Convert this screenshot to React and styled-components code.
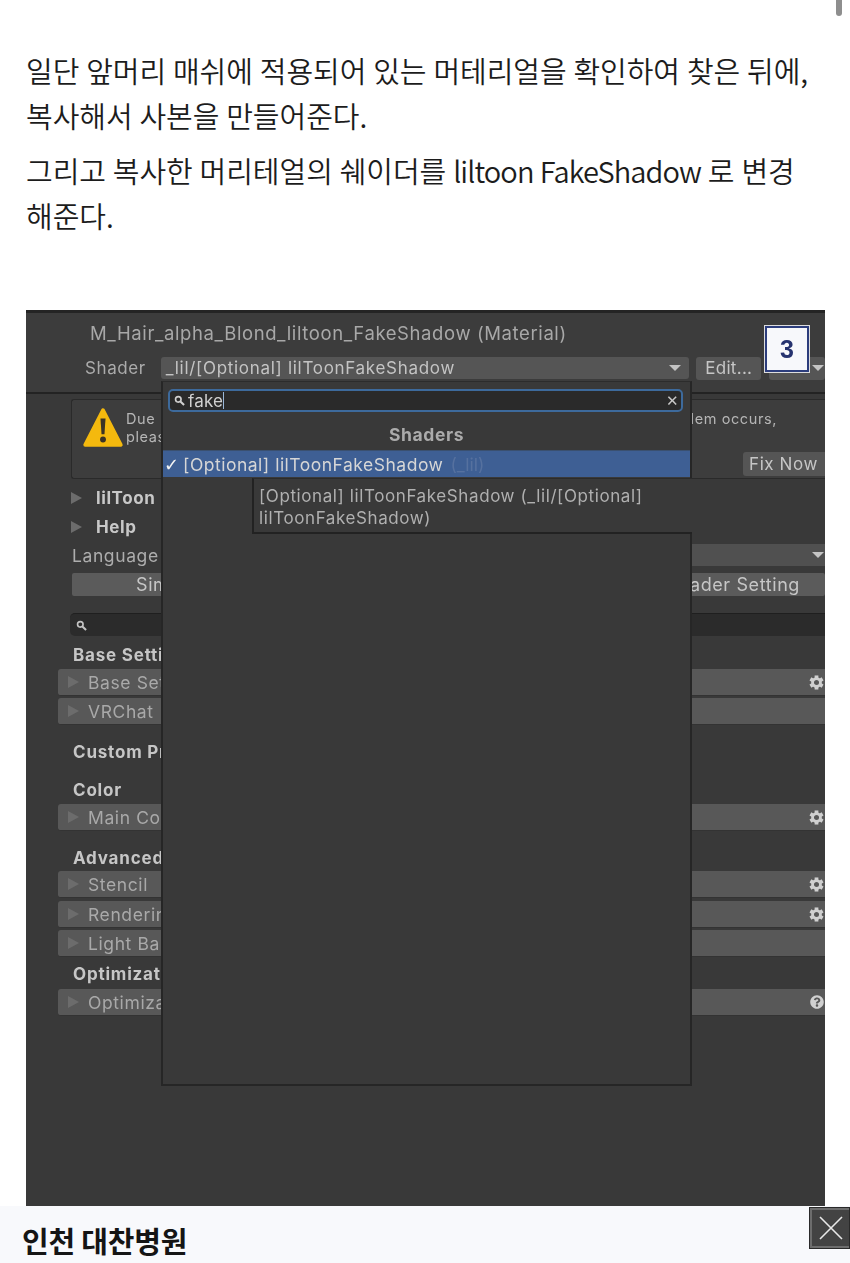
import React from "react";
import styled, { createGlobalStyle } from "styled-components";
import { FaQuestionCircle } from "react-icons/fa";

const Global = createGlobalStyle`
  html, body { margin: 0; padding: 0; background: #fff; }
  * { box-sizing: border-box; }
`;

const Page = styled.div`
  position: relative;
  width: 850px;
  height: 1263px;
  overflow: hidden;
  background: #fff;
  padding-top: 48px;
`;
const ScrollThumb = styled.div`
  position: absolute;
  top: 0;
  right: 8px;
  width: 6px;
  height: 16px;
  border-radius: 0 0 3px 3px;
  background: #8e8e8e;
`;
const Article = styled.div`
  padding: 0 26px;
  height: 262px;
`;
const Para = styled.p`
  margin: 0 0 10px;
  font-family: "Noto Sans CJK KR", "Noto Sans", sans-serif;
  font-size: 29px;
  font-weight: 350;
  line-height: 45px;
  color: #1c1c1c;
  letter-spacing: -0.05px;
  word-spacing: 0.5px;
  white-space: nowrap;
`;
const Latin = styled.span`
  letter-spacing: -0.9px;
`;
const Editor = styled.div`
  position: relative;
  margin-left: 26px;
  width: 799px;
  height: 896px;
  overflow: hidden;
  background: #393939;
  border-top: 3px solid #242424;
  font-family: Inter, "Liberation Sans", sans-serif;
  letter-spacing: 0.6px;
  color: #c2c2c2;
  filter: blur(0.45px);
`;
const Header = styled.div`
  height: 81px;
  background: #3c3c3c;
  border-bottom: 2px solid #232323;
  padding: 7px 0 0 59px;
`;
const Title = styled.div`
  margin-left: 5px;
  font-size: 18.5px;
  line-height: 26px;
  color: #a8a8a8;
  white-space: nowrap;
`;
const ShaderRow = styled.div`
  display: flex;
  align-items: center;
  height: 22px;
  margin-top: 11px;
`;
const ShaderLabel = styled.div`
  width: 76px;
  font-size: 17px;
  color: #ababab;
`;
const ShaderField = styled.div`
  display: flex;
  align-items: center;
  justify-content: space-between;
  width: 530px;
  height: 22px;
  padding: 0 8px 0 5px;
  border-radius: 3px;
  background: #555;
  font-size: 17px;
  letter-spacing: 0.7px;
  color: #c4c4c4;
  white-space: nowrap;
`;
const Caret = styled.span`
  width: 0;
  height: 0;
  border-left: 6px solid transparent;
  border-right: 6px solid transparent;
  border-top: 6px solid #c4c4c4;
`;
const EditButton = styled.div`
  margin-left: 7px;
  width: 65px;
  height: 23px;
  line-height: 23px;
  border-radius: 3px;
  background: #555;
  text-align: center;
  font-size: 17px;
  letter-spacing: 0.3px;
  color: #c6c6c6;
`;
const MoreButton = styled.div`
  display: flex;
  align-items: center;
  justify-content: flex-end;
  margin-left: 8px;
  width: 56px;
  height: 23px;
  padding-right: 1px;
  border-radius: 3px;
  background: #555;
`;
const Body = styled.div`
  padding-top: 5px;
`;
const Warning = styled.div`
  display: flex;
  position: relative;
  margin-left: 45px;
  height: 80px;
  padding: 7px 0 0 10px;
  background: #3d3d3d;
  border: 1px solid #2a2a2a;
  border-right: none;
  border-radius: 3px 0 0 3px;
`;
const WarningText = styled.div`
  flex: 1;
  margin: 3px 0 0 2px;
  font-size: 14.5px;
  line-height: 18px;
  color: #b6b6b6;
`;
const WarningLine = styled.div`
  display: flex;
  justify-content: space-between;
  padding-right: 48px;
`;
const FixNow = styled.div`
  position: absolute;
  right: 0;
  bottom: 2px;
  width: 82px;
  height: 24px;
  line-height: 24px;
  padding-left: 6px;
  border-radius: 3px 0 0 3px;
  background: #555;
  font-size: 17px;
  color: #c6c6c6;
`;
const FoldRow = styled.div`
  display: flex;
  align-items: center;
  height: 29px;
  padding-left: 45px;
  font-size: 17px;
  font-weight: 700;
  color: #c8c8c8;
  margin-top: ${(p) => p.$top || 0}px;
`;
const Triangle = styled.span`
  display: inline-block;
  flex: none;
  width: 0;
  height: 0;
  border-top: 6px solid transparent;
  border-bottom: 6px solid transparent;
  border-left: 11px solid #6c6c6c;
  margin-right: ${(p) => p.$gap || 14}px;
`;
const LanguageRow = styled.div`
  display: flex;
  align-items: center;
  height: 22px;
  margin: 3px 0 0 46px;
  font-size: 17.5px;
  color: #adadad;
`;
const LanguageField = styled.div`
  display: flex;
  align-items: center;
  justify-content: flex-end;
  margin-left: auto;
  width: 400px;
  height: 22px;
  padding-right: 1px;
  background: #505050;
`;
const ModeRow = styled.div`
  display: grid;
  grid-template-columns: 1fr 1fr;
  gap: 1px;
  margin: 7px 0 0 46px;
  height: 23px;
`;
const ModeButton = styled.div`
  height: 23px;
  line-height: 23px;
  background: #5b5b5b;
  border-radius: 2px;
  font-size: 18px;
  color: #c6c6c6;
  white-space: nowrap;
  text-align: ${(p) => p.$align};
  padding: 0 25px 0 64px;
`;
const SearchBar = styled.div`
  display: flex;
  align-items: center;
  margin: 17px 0 0 44px;
  height: 23px;
  padding-left: 6px;
  background: #2b2b2b;
  border-radius: 5px 0 0 5px;
  border-top: 1px solid #1f1f1f;
`;
const Sections = styled.div`
  padding-top: 7px;
`;
const SectionTitle = styled.div`
  margin-left: 47px;
  margin-top: ${(p) => p.$top || 0}px;
  height: 24px;
  line-height: 24px;
  font-size: 17px;
  font-weight: 700;
  letter-spacing: 0.8px;
  color: #c6c6c6;
  white-space: nowrap;
`;
const PropRow = styled.div`
  display: flex;
  align-items: center;
  margin-left: 32px;
  margin-top: ${(p) => p.$top ?? 2}px;
  height: 27px;
  padding: 0 1px 0 10px;
  background: #585858;
  border-radius: 3px 0 0 3px;
  border-bottom: 1px solid #333;
  font-size: 17.5px;
  color: #a9a9a9;
  white-space: nowrap;
`;
const PropIcon = styled.span`
  display: flex;
  margin-left: auto;
  color: #d0d0d0;
`;
const Popup = styled.div`
  position: absolute;
  left: 135px;
  top: 68px;
  width: 531px;
  height: 705px;
  background: #393939;
  border: 2px solid #262626;
  border-top: 1px solid #2c2c2c;
  padding-top: 7px;
`;
const PopupSearch = styled.div`
  display: flex;
  align-items: center;
  margin: 0 7px 0 5px;
  height: 23px;
  padding: 0 2px 0 4px;
  background: #2a2a2a;
  border: 2px solid #3d6a9c;
  border-radius: 5px;
  font-size: 17px;
  letter-spacing: 0.2px;
  color: #d0d0d0;
`;
const CaretBar = styled.span`
  width: 1px;
  height: 17px;
  margin-right: auto;
  background: #9ab7d8;
`;
const Clear = styled.span`
  font-size: 15px;
  color: #c8c8c8;
  line-height: 1;
`;
const PopupHeading = styled.div`
  height: 38px;
  line-height: 45px;
  text-align: center;
  font-size: 17.5px;
  font-weight: 700;
  color: #ababab;
`;
const SelectedItem = styled.div`
  display: flex;
  align-items: center;
  height: 27px;
  padding-left: 1px;
  background: #3e5f94;
  border-top: 1px solid #3a5070;
  font-size: 17.5px;
  letter-spacing: 0.5px;
  color: #d6d6d6;
  white-space: nowrap;
`;
const Check = styled.span`
  width: 19px;
  font-size: 18px;
  font-weight: 700;
  color: #f4f4f4;
  font-family: "DejaVu Sans", sans-serif;
`;
const Muted = styled.span`
  margin-left: 7px;
  letter-spacing: 0;
  color: #56719f;
`;
const Tooltip = styled.div`
  position: absolute;
  left: 89px;
  top: 96px;
  width: 440px;
  height: 56px;
  padding: 6px 5px;
  background: #393939;
  border: 2px solid #222;
  border-right: none;
  border-top: 1px solid #2b2b2b;
  font-size: 17px;
  line-height: 22px;
  color: #b0b0b0;
`;
const Badge = styled.div`
  position: absolute;
  left: 739px;
  top: 13px;
  width: 44px;
  height: 46px;
  display: flex;
  align-items: center;
  justify-content: center;
  background: #f7f8fb;
  border: 2px solid #2c3d7c;
  box-shadow: 0 0 0 1px #ddd;
  font-family: "Liberation Sans", sans-serif;
  font-size: 25px;
  font-weight: 700;
  letter-spacing: 0;
  color: #26336f;
`;
const AdBar = styled.div`
  position: absolute;
  left: 0;
  bottom: 0;
  width: 850px;
  height: 57px;
  display: flex;
  align-items: center;
  padding: 10px 0 0 22px;
  background: #f8f9fc;
  font-family: "Noto Sans CJK KR", sans-serif;
  font-size: 29px;
  font-weight: 700;
  letter-spacing: -0.2px;
  color: #151515;
`;
const CloseBox = styled.div`
  position: absolute;
  right: 0;
  bottom: 14px;
  width: 41px;
  height: 42px;
  display: flex;
  align-items: center;
  justify-content: center;
  background: #434343;
  border: 3px solid #6d6d6d;
  border-right: none;
  outline: 1px solid #2a2a2a;
  outline-offset: -1px;
`;

const Search = ({ size = 12, color = "#d0d0d0" }) => (
  <svg width={size} height={size} viewBox="0 0 12 12" style={{ flex: "none", marginRight: 3 }}>
    <circle cx="4.7" cy="4.7" r="3" fill="none" stroke={color} strokeWidth="1.8" />
    <path d="M7 7l4 4" stroke={color} strokeWidth="2.2" />
  </svg>
);
const Gear = () => (
  <svg width="15" height="15" viewBox="0 0 16 16">
    {[0, 60, 120, 180, 240, 300].map((a) => (
      <rect key={a} x="6" y="0.5" width="4" height="4" fill="currentColor" transform={`rotate(${a} 8 8)`} />
    ))}
    <circle cx="8" cy="8" r="4.2" fill="none" stroke="currentColor" strokeWidth="3" />
  </svg>
);
const WarnIcon = () => (
  <svg width="42" height="42" viewBox="0 0 40 40" style={{ flex: "none" }}>
    <path d="M20 3L37 36H3Z" fill="#f4b90e" stroke="#f4b90e" strokeWidth="3.5" strokeLinejoin="round" />
    <path d="M17.6 11h4.8l-1 15h-2.8Z" fill="#3a3326" />
    <circle cx="20" cy="31" r="2.8" fill="#3a3326" />
  </svg>
);

export default function App() {
  return (
    <Page>
      <Global />
      <ScrollThumb />
      <Article>
        <Para>일단 앞머리 매쉬에 적용되어 있는 머테리얼을 확인하여 찾은 뒤에,<br />복사해서 사본을 만들어준다.</Para>
        <Para>그리고 복사한 머리테얼의 쉐이더를 <Latin>liltoon FakeShadow</Latin> 로 변경<br />해준다.</Para>
      </Article>
      <Editor>
        <Header>
          <Title>M_Hair_alpha_Blond_liltoon_FakeShadow (Material)</Title>
          <ShaderRow>
            <ShaderLabel>Shader</ShaderLabel>
            <ShaderField>
              <span>_lil/[Optional] lilToonFakeShadow</span>
              <Caret />
            </ShaderField>
            <EditButton>Edit...</EditButton>
            <MoreButton><Caret /></MoreButton>
          </ShaderRow>
        </Header>
        <Body>
          <Warning>
            <WarnIcon />
            <WarningText>
              <WarningLine><span>Due</span><span>problem occurs,</span></WarningLine>
              <WarningLine><span>please</span></WarningLine>
            </WarningText>
            <FixNow>Fix Now</FixNow>
          </Warning>
          <FoldRow $top={4}><Triangle />lilToon</FoldRow>
          <FoldRow><Triangle />Help</FoldRow>
          <LanguageRow>Language<LanguageField><Caret /></LanguageField></LanguageRow>
          <ModeRow>
            <ModeButton $align="left">Simple</ModeButton>
            <ModeButton $align="right">Shader Setting</ModeButton>
          </ModeRow>
          <SearchBar><Search size={11} color="#c4c4c4" /></SearchBar>
          <Sections>
            <SectionTitle>Base Settings</SectionTitle>
            <PropRow $top={2}><Triangle $gap={9} />Base Setting<PropIcon><Gear /></PropIcon></PropRow>
            <PropRow><Triangle $gap={9} />VRChat</PropRow>
            <SectionTitle $top={15}>Custom Properties</SectionTitle>
            <SectionTitle $top={14}>Color</SectionTitle>
            <PropRow $top={2}><Triangle $gap={9} />Main Color<PropIcon><Gear /></PropIcon></PropRow>
            <SectionTitle $top={15}>Advanced</SectionTitle>
            <PropRow $top={1}><Triangle $gap={9} />Stencil<PropIcon><Gear /></PropIcon></PropRow>
            <PropRow $top={3}><Triangle $gap={9} />Rendering<PropIcon><Gear /></PropIcon></PropRow>
            <PropRow><Triangle $gap={9} />Light Bake</PropRow>
            <SectionTitle $top={5}>Optimization</SectionTitle>
            <PropRow $top={3}><Triangle $gap={9} />Optimization<PropIcon><FaQuestionCircle size={14} /></PropIcon></PropRow>
          </Sections>
        </Body>
        <Popup>
          <PopupSearch>
            <Search size={11} />
            fake<CaretBar />
            <Clear>✕</Clear>
          </PopupSearch>
          <PopupHeading>Shaders</PopupHeading>
          <SelectedItem>
            <Check>✓</Check>[Optional] lilToonFakeShadow<Muted>(_lil)</Muted>
          </SelectedItem>
          <Tooltip>
            [Optional] lilToonFakeShadow (_lil/[Optional]
            <br />
            lilToonFakeShadow)
          </Tooltip>
        </Popup>
        <Badge>3</Badge>
      </Editor>
      <AdBar>
        인천 대찬병원
      </AdBar>
      <CloseBox>
        <svg width="26" height="26" viewBox="0 0 26 26">
          <path d="M2 2L24 24M24 2L2 24" stroke="#e8e8e8" strokeWidth="1.6" />
        </svg>
      </CloseBox>
    </Page>
  );
}
